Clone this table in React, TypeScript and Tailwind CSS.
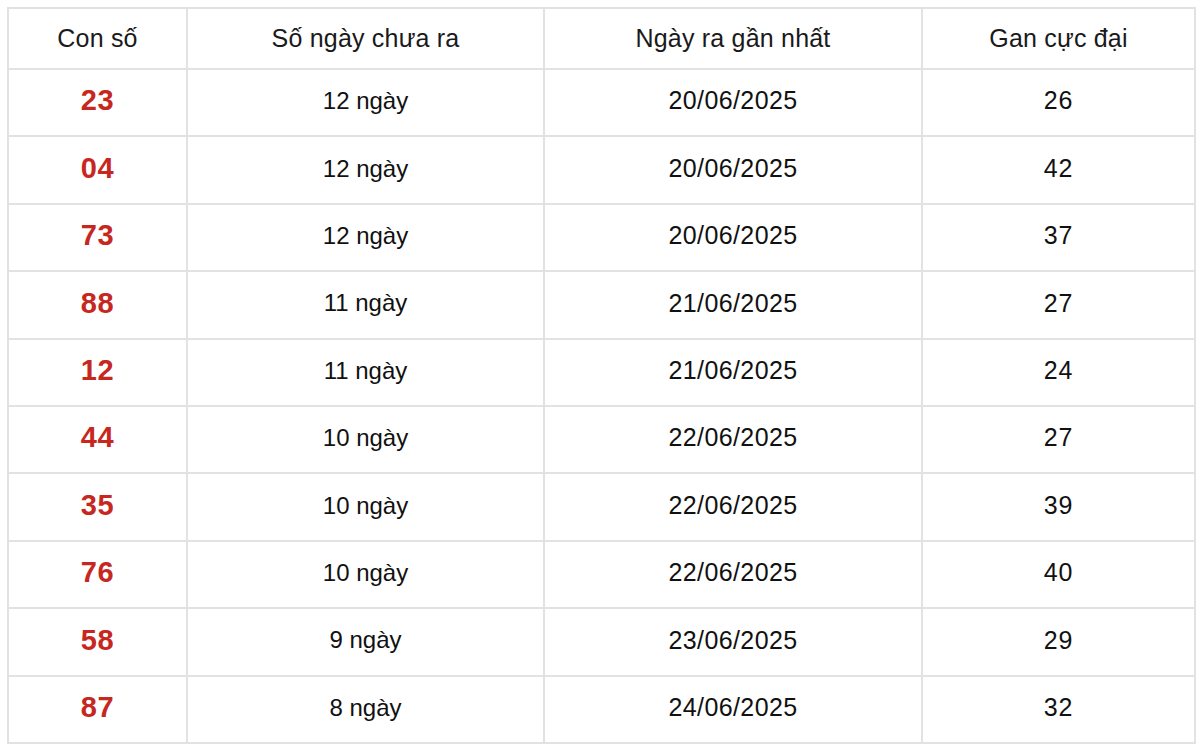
const rows = [
  ["23", "12 ngày", "20/06/2025", "26"],
  ["04", "12 ngày", "20/06/2025", "42"],
  ["73", "12 ngày", "20/06/2025", "37"],
  ["88", "11 ngày", "21/06/2025", "27"],
  ["12", "11 ngày", "21/06/2025", "24"],
  ["44", "10 ngày", "22/06/2025", "27"],
  ["35", "10 ngày", "22/06/2025", "39"],
  ["76", "10 ngày", "22/06/2025", "40"],
  ["58", "9 ngày", "23/06/2025", "29"],
  ["87", "8 ngày", "24/06/2025", "32"],
];

const headers = ["Con số", "Số ngày chưa ra", "Ngày ra gần nhất", "Gan cực đại"];

export default function App() {
  return (
    <div
      className="w-[1200px] h-[752px] bg-white pt-[7px] pl-[7px]"
      style={{ fontFamily: '"Liberation Sans", Arial, sans-serif' }}
    >
      <table className="w-[1187px] table-fixed border-collapse text-center text-[#111]">
        <colgroup>
          <col className="w-[179px]" />
          <col className="w-[357px]" />
          <col className="w-[378px]" />
          <col className="w-[273px]" />
        </colgroup>
        <thead>
          <tr className="h-[61px]">
            {headers.map((h) => (
              <th
                key={h}
                className="border-2 border-[#e2e2e2] text-[25px] font-normal text-[#1a1a1a] tracking-[0.2px]"
              >
                {h}
              </th>
            ))}
          </tr>
        </thead>
        <tbody>
          {rows.map((r) => (
            <tr key={r[0]} className="h-[67.4px]">
              <td className="border-2 border-[#e2e2e2] pb-[3px] text-[29px] font-bold text-[#c6271f] tracking-[0.5px]">
                {r[0]}
              </td>
              <td className="border-2 border-[#e2e2e2] pb-[3px] text-[24px]">{r[1]}</td>
              <td className="border-2 border-[#e2e2e2] pb-[3px] text-[25px] tracking-[0.4px]">{r[2]}</td>
              <td className="border-2 border-[#e2e2e2] pb-[3px] text-[25px] tracking-[0.8px]">{r[3]}</td>
            </tr>
          ))}
        </tbody>
      </table>
    </div>
  );
}
